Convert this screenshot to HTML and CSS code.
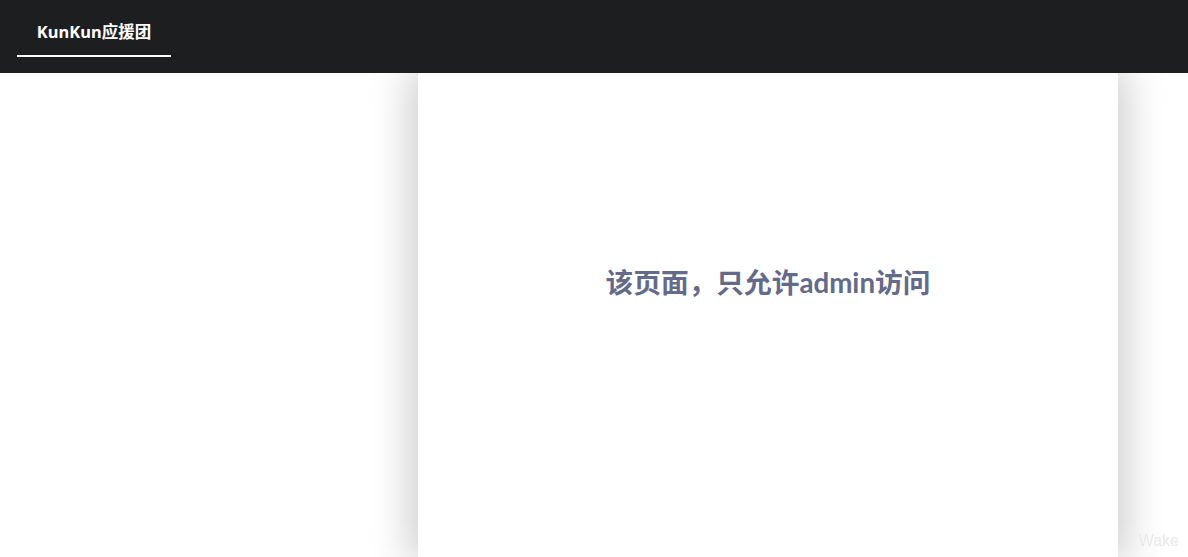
FILE: index.html
```html
<!DOCTYPE html>
<html lang="zh">
<head>
<meta charset="utf-8">
<title>KunKun应援团</title>
<link rel="stylesheet" href="styles.css">
</head>
<body>
<header class="topbar">
  <nav class="tabs">
    <a class="tab active">KunKun应援团</a>
  </nav>
</header>
<main class="main">
  <section class="card">
    <h1 class="notice">该页面，只允许admin访问</h1>
  </section>
</main>
<div class="watermark">Wake</div>
</body>
</html>
```
FILE: styles.css
```css
html, body {
  margin: 0;
  padding: 0;
  height: 100%;
  overflow: hidden;
  background: #ffffff;
  font-family: "Lato", "Noto Sans CJK SC", sans-serif;
}
.topbar {
  height: 73px;
  background: #1d1e20;
  display: flex;
  align-items: stretch;
  padding-left: 17px;
  box-sizing: border-box;
  position: relative;
  z-index: 2;
}
.tabs {
  display: flex;
  align-items: stretch;
}
.tab {
  display: flex;
  align-items: center;
  justify-content: center;
  width: 154px;
  height: 57px;
  box-sizing: border-box;
  padding-top: 7px;
  color: #ffffff;
  font-family: "Noto Sans", "Noto Sans CJK SC", sans-serif;
  font-weight: 700;
  font-size: 16.5px;
  border-bottom: 2px solid #ffffff;
}
.main {
  display: flex;
  justify-content: flex-start;
  height: calc(100% - 73px);
  padding-left: 418px;
}
.card {
  width: 700px;
  background: #ffffff;
  box-shadow: 0 0 40px 6px rgba(0, 0, 0, 0.22);
  display: flex;
  justify-content: center;
  padding-top: 188px;
  box-sizing: border-box;
}
.notice {
  margin: 0;
  font-size: 27.7px;
  font-weight: 700;
  color: #646a89;
  line-height: 44px;
  height: 44px;
}
.watermark {
  position: fixed;
  right: 9px;
  bottom: 7px;
  font-family: "Liberation Sans", sans-serif;
  font-size: 16px;
  color: #e8e8e8;
}
```
